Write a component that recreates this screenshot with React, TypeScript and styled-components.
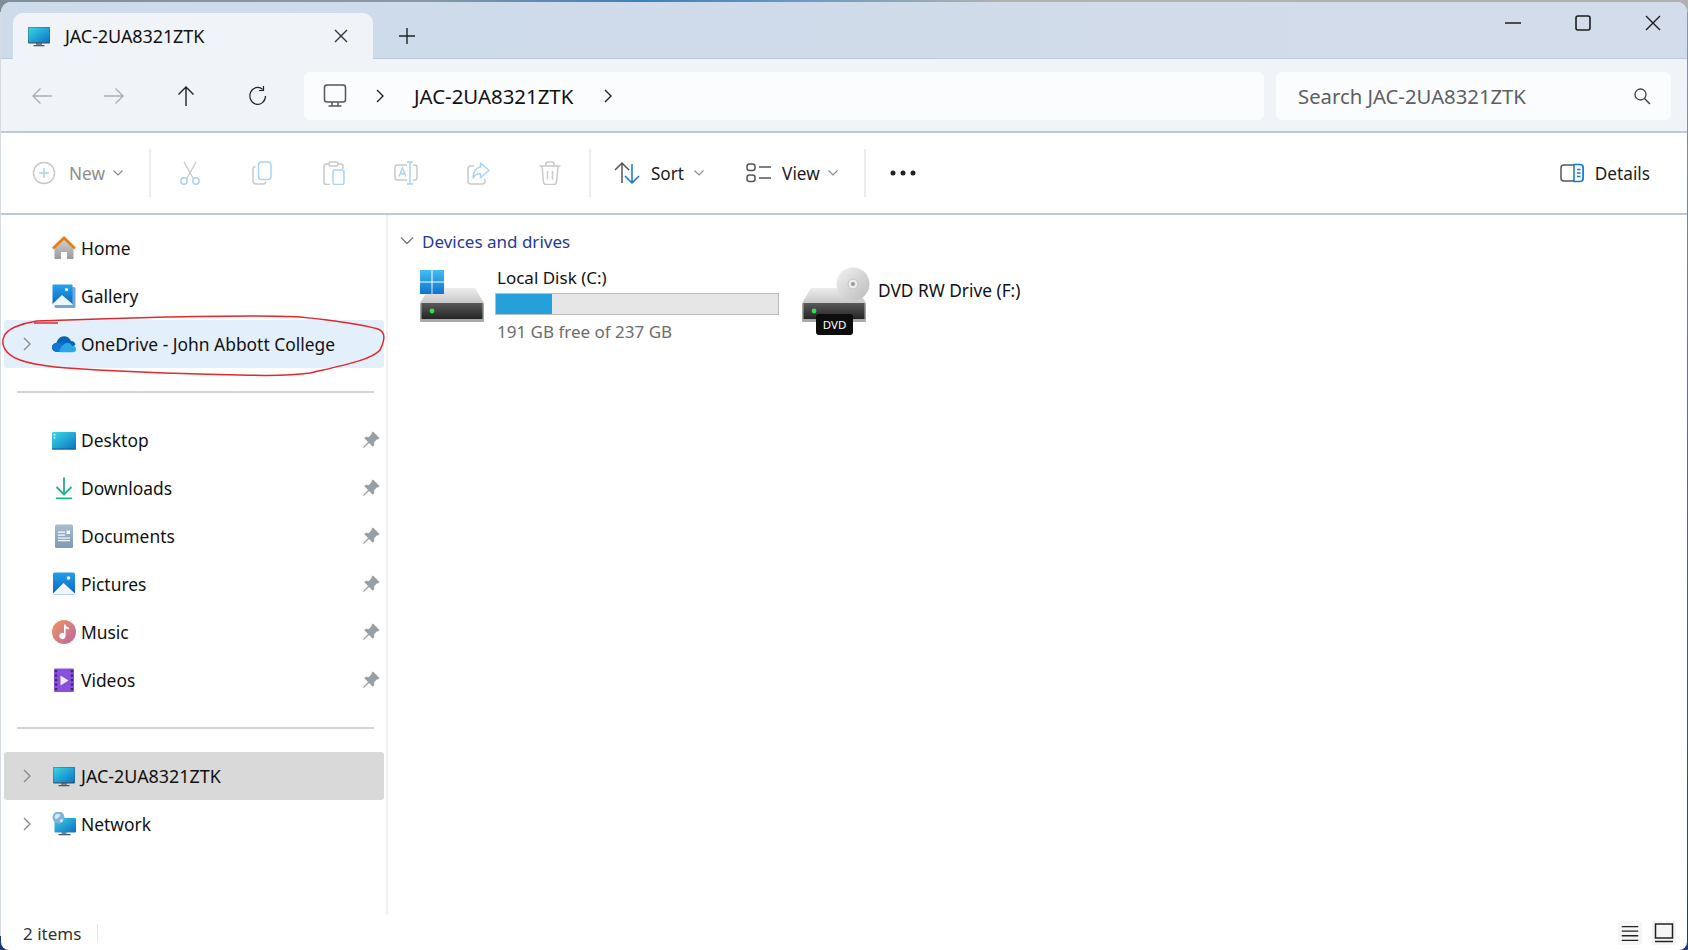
import React from 'react';
import styled, { createGlobalStyle } from 'styled-components';

const GlobalStyle = createGlobalStyle`
  html, body { margin: 0; padding: 0; height: 100%; overflow: hidden; }
  body { font-family: "Noto Sans", "Open Sans", sans-serif; color: #111; }
  * { box-sizing: border-box; }
`;

const Desk = styled.div`
  position: relative;
  width: 1688px;
  height: 950px;
  padding: 2px 1px 0;
  background:
    linear-gradient(90deg, #7f8f99 0%, #8a9aa5 25%, #3d7fb8 38%, #6f9cbf 48%, #b5b3ae 60%, #b0b0b0 100%) top / 100% 12px no-repeat,
    linear-gradient(#d5dce3, #d5dce3) left top / 1px 936px no-repeat,
    linear-gradient(#8d97a6, #1c3a7c) right top / 1px 100% no-repeat,
    #1c3a7c;
`;

const Window = styled.div`
  height: 948px;
  border-radius: 10px 10px 8px 8px;
  overflow: hidden;
  background: #fff;
  display: flex;
  flex-direction: column;
`;

const TitleBar = styled.div`
  height: 57px;
  flex: none;
  display: flex;
  align-items: flex-start;
  background: linear-gradient(90deg, #cddbea, #d3dcea);
  border-bottom: 1px solid #bccbda;
`;

const Tab = styled.div`
  width: 360px;
  height: 46px;
  margin: 11px 0 0 12px;
  padding: 0 20px 0 14px;
  display: flex;
  align-items: center;
  background: #f0f4f9;
  border-radius: 10px 10px 0 0;
  font-size: 18px;
  letter-spacing: -0.1px;
`;

const TabLabel = styled.span`
  flex: 1;
  margin-left: 14px;
`;

const NewTab = styled.div`
  width: 24px;
  height: 24px;
  margin: 22px 0 0 22px;
  display: flex;
  align-items: center;
  justify-content: center;
`;

const WindowControls = styled.div`
  margin-left: auto;
  margin-right: -1px;
  display: flex;
`;

const WindowButton = styled.div`
  width: 70px;
  height: 42px;
  display: flex;
  align-items: center;
  justify-content: center;
`;

const NavBar = styled.div`
  height: 74px;
  flex: none;
  padding: 13px 16px 0 5px;
  display: flex;
  align-items: flex-start;
  background: #f0f4f9;
  border-bottom: 2px solid #bccbda;
`;

const NavButton = styled.div`
  width: 72px;
  height: 48px;
  display: flex;
  align-items: center;
  justify-content: center;
`;

const AddressBox = styled.div`
  flex: 1;
  height: 48px;
  margin-left: 10px;
  padding-left: 19px;
  display: flex;
  align-items: center;
  gap: 27px;
  background: #fbfcfe;
  border-radius: 6px;
  font-size: 20.4px;
`;

const AddressText = styled.span`
  margin-left: 1px;
  margin-right: 2px;
`;

const SearchBox = styled.div`
  width: 395px;
  height: 48px;
  margin-left: 12px;
  padding: 0 20px 0 22px;
  display: flex;
  align-items: center;
  justify-content: space-between;
  background: #fbfcfe;
  border-radius: 6px;
  font-size: 20.3px;
  color: #5e5e5e;
`;

const Toolbar = styled.div`
  height: 82px;
  flex: none;
  padding-left: 31px;
  display: flex;
  align-items: center;
  background: #fff;
  border-bottom: 2px solid #bccbda;
  font-size: 17.2px;
`;

const ToolSeparator = styled.div<{ $before: number; $after?: number }>`
  width: 2px;
  height: 48px;
  margin-left: ${p => p.$before}px;
  margin-right: ${p => p.$after ?? 0}px;
  background: #ececec;
`;

const ToolLabelButton = styled.div<{ $disabled?: boolean; $offset?: number }>`
  display: flex;
  align-items: center;
  margin-left: ${p => p.$offset ?? 0}px;
  color: ${p => (p.$disabled ? '#8c8c8c' : '#1c1c1c')};
`;

const ToolText = styled.span<{ $before: number; $after: number }>`
  margin-left: ${p => p.$before}px;
  margin-right: ${p => p.$after}px;
`;

const ToolIcon = styled.div`
  width: 72px;
  height: 48px;
  display: flex;
  align-items: center;
  justify-content: center;
`;

const DetailsButton = styled.div`
  margin-left: auto;
  padding-right: 37px;
  display: flex;
  align-items: center;
  gap: 11px;
  color: #1c1c1c;
`;

const Body = styled.div`
  flex: 1;
  min-height: 0;
  display: flex;
`;

const Sidebar = styled.nav`
  width: 387px;
  flex: none;
  padding: 9px 0 0 3px;
  border-right: 2px solid #f2f2f2;
  font-size: 17.4px;
`;

const TreeRow = styled.div<{ $state?: 'hover' | 'selected' }>`
  width: 380px;
  height: 48px;
  display: flex;
  align-items: center;
  border-radius: 3px;
  background: ${p => (p.$state === 'hover' ? '#e3f0fb' : p.$state === 'selected' ? '#d9d9d9' : 'transparent')};
`;

const Expander = styled.div`
  width: 48px;
  flex: none;
  padding-left: 17px;
  display: flex;
`;

const TreeLabel = styled.span<{ $size?: number }>`
  flex: 1;
  margin-left: 5px;
  font-size: ${p => p.$size ?? 17.4}px;
`;

const PinSlot = styled.div`
  width: 22px;
  flex: none;
  display: flex;
`;

const TreeRule = styled.div`
  width: 357px;
  height: 2px;
  margin: 23px 0 23px 13px;
  background: #d4d4d4;
`;

const Content = styled.main`
  flex: 1;
  padding: 13px 0 0 12px;
`;

const GroupHeader = styled.div`
  height: 26px;
  display: flex;
  align-items: center;
  gap: 8px;
  font-size: 17px;
  color: #243a96;
`;

const DriveList = styled.div`
  margin: 11px 0 0 20px;
  display: flex;
`;

const DriveTile = styled.div<{ $width: number }>`
  width: ${p => p.$width}px;
  display: flex;
  align-items: flex-start;
  font-size: 17px;
`;

const DriveInfo = styled.div`
  margin-left: 11px;
  width: 284px;
`;

const DriveName = styled.div`
  height: 26px;
  line-height: 26px;
  padding-left: 2px;
`;

const OpticalName = styled.div`
  height: 26px;
  line-height: 26px;
  margin: 13px 0 0 8px;
  font-size: 17.3px;
`;

const UsageBar = styled.div`
  height: 22px;
  margin-top: 2px;
  background: #e6e6e6;
  border: 1px solid #bcbcbc;
`;

const UsageFill = styled.div`
  height: 100%;
  background: #26a0da;
`;

const DriveCaption = styled.div`
  height: 26px;
  line-height: 26px;
  margin-top: 4px;
  padding-left: 2px;
  color: #6d6d6d;
`;

const StatusBar = styled.footer`
  height: 35px;
  flex: none;
  padding: 1px 11px 0 22px;
  display: flex;
  align-items: center;
  font-size: 17px;
  color: #333;
`;

const StatusSeparator = styled.div`
  width: 1px;
  height: 18px;
  margin-left: 16px;
  background: #e6e6e6;
`;

const ViewToggles = styled.div`
  margin-left: auto;
  display: flex;
  gap: 10px;
`;

const ViewToggle = styled.div`
  width: 24px;
  height: 24px;
  border-radius: 3px;
  background: #f5f5f5;
  display: flex;
  align-items: center;
  justify-content: center;
`;

const Annotation = styled.svg`
  position: absolute;
  left: 0;
  top: 300px;
  pointer-events: none;
`;

const Chevron = ({ color = '#8a8a8a' }: { color?: string }) => (
  <svg width="12" height="16" viewBox="0 0 12 16" fill="none">
    <path d="M3 2l6 6-6 6" stroke={color} strokeWidth="1.4" />
  </svg>
);

const Caret = () => (
  <svg width="12" height="8" viewBox="0 0 12 8" fill="none">
    <path d="M1.5 1.5L6 6l4.5-4.5" stroke="#8c8c8c" strokeWidth="1.2" />
  </svg>
);

const Line = ({ d, color = '#1c1c1c', size = 24, w = 1.4 }: { d: string; color?: string; size?: number; w?: number }) => (
  <svg width={size} height={size} viewBox="0 0 24 24" fill="none">
    <path d={d} stroke={color} strokeWidth={w} />
  </svg>
);

const PcIcon = ({ id, size = 24 }: { id: string; size?: number }) => (
  <svg width={size} height={size} viewBox="0 0 24 24">
    <defs>
      <linearGradient id={id} x1="0" y1="0" x2="1" y2="1">
        <stop offset="0" stopColor="#38d8e6" />
        <stop offset="1" stopColor="#0d72c4" />
      </linearGradient>
    </defs>
    <rect x="9" y="19" width="6" height="2.5" fill="#7b8792" />
    <rect x="6.5" y="21" width="11" height="1.3" fill="#4f5a64" />
    <rect x="1" y="3" width="22" height="16.5" rx="1" fill="#3f4c58" />
    <rect x="1.4" y="3.4" width="21.2" height="15" fill={`url(#${id})`} />
  </svg>
);

const HomeIcon = () => (
  <svg width="24" height="24" viewBox="0 0 24 24">
    <defs>
      <linearGradient id="homeWall" x1="0" y1="0" x2="0" y2="1">
        <stop offset="0" stopColor="#d2d2d2" />
        <stop offset="1" stopColor="#9a9a9a" />
      </linearGradient>
    </defs>
    <path d="M2.500 11.500L12 3l9.500 8.500V23h-6.500v-7H9v7H2.500z" fill="url(#homeWall)" />
    <path d="M1 12.500L12 2l11 10.500" fill="none" stroke="#e67e14" strokeWidth="2.800" />
  </svg>
);

const GalleryIcon = () => (
  <svg width="24" height="24" viewBox="0 0 24 24">
    <defs>
      <linearGradient id="galleryBg" x1="0" y1="0" x2="0" y2="1">
        <stop offset="0" stopColor="#26a3ec" />
        <stop offset="1" stopColor="#0a66c0" />
      </linearGradient>
    </defs>
    <rect x="2.500" y="3" width="21" height="21" rx="1.500" fill="#6fa9dc" />
    <rect x="0.500" y="0.500" width="20" height="20.500" rx="1" fill="url(#galleryBg)" />
    <circle cx="14.500" cy="5.500" r="1.600" fill="#fff" />
    <path d="M0.500 20l9.500-9 10.500 9v1h-20z" fill="#eef6fd" />
  </svg>
);

const CloudIcon = () => (
  <svg width="24" height="24" viewBox="0 0 24 24">
    <path d="M6 20C2.500 20 0 18 0 15.200C0 12.800 2 11 4.500 10.800C5.500 7 8.500 4.200 12 4.200C15.200 4.200 17.800 6 19 9C21.500 9.200 23 10.500 23.500 12.500L15 20z" fill="#0364b8" />
    <path d="M6 20C2.500 20 0 18 0 15.200C0 12.800 2 11 4.500 10.800C6 10.600 8 11 9.500 12.200L14 20z" fill="#0f78d4" />
    <path d="M9.500 20.200C7 20.200 6.800 17 9 15.900C10 12.800 13 10.600 16 11C18 11.300 19.500 12.400 20.200 13.800C22.800 13.800 24 15.500 24 17.200C24 19 22.600 20.200 21 20.200z" fill="#28a8ea" />
  </svg>
);

const DesktopIcon = () => (
  <svg width="24" height="24" viewBox="0 0 24 24">
    <defs>
      <linearGradient id="deskBg" x1="0" y1="0" x2="1" y2="1">
        <stop offset="0" stopColor="#3bdbe8" />
        <stop offset="1" stopColor="#0c72c0" />
      </linearGradient>
    </defs>
    <rect x="0" y="4" width="24" height="17.500" rx="1.200" fill="url(#deskBg)" />
    <rect x="1.800" y="6" width="1.500" height="1.500" fill="#fff" />
    <rect x="1.800" y="9" width="1.500" height="1.500" fill="#fff" />
    <rect x="0" y="20.500" width="24" height="1" fill="#0c5c99" />
  </svg>
);

const DownloadIcon = () => (
  <svg width="24" height="24" viewBox="0 0 24 24" fill="none">
    <path d="M12 1.500v17M4.500 11l7.500 7.500 7.500-7.500" stroke="#22b08e" strokeWidth="1.800" />
    <rect x="4" y="21.500" width="16" height="1.700" fill="#22b08e" />
  </svg>
);

const DocumentIcon = () => (
  <svg width="24" height="24" viewBox="0 0 24 24">
    <defs>
      <linearGradient id="docBg" x1="0" y1="0" x2="0" y2="1">
        <stop offset="0" stopColor="#a9bdd4" />
        <stop offset="1" stopColor="#7d98b8" />
      </linearGradient>
    </defs>
    <rect x="3" y="0.500" width="18" height="23.500" rx="1.500" fill="url(#docBg)" />
    <rect x="6" y="7.500" width="7" height="1.200" fill="#fff" />
    <rect x="6" y="10.500" width="7" height="1.200" fill="#fff" />
    <rect x="6" y="13.500" width="12" height="1.200" fill="#fff" />
    <rect x="6" y="16" width="12" height="1.200" fill="#fff" />
    <rect x="14.500" y="6.500" width="3.500" height="3.500" fill="#fff" />
  </svg>
);

const PictureIcon = () => (
  <svg width="24" height="24" viewBox="0 0 24 24">
    <defs>
      <linearGradient id="picBg" x1="0" y1="0" x2="0" y2="1">
        <stop offset="0" stopColor="#23a0ea" />
        <stop offset="1" stopColor="#0a64bd" />
      </linearGradient>
    </defs>
    <rect x="1" y="0.500" width="22" height="22" rx="1.500" fill="url(#picBg)" />
    <circle cx="16.500" cy="6" r="1.800" fill="#fff" />
    <path d="M1 21.500l10.500-10.500 11.500 10.500v1H1z" fill="#eef6fd" />
  </svg>
);

const MusicIcon = () => (
  <svg width="24" height="24" viewBox="0 0 24 24">
    <defs>
      <linearGradient id="musicBg" x1="0" y1="0" x2="1" y2="1">
        <stop offset="0" stopColor="#f0955a" />
        <stop offset="1" stopColor="#bb66a8" />
      </linearGradient>
    </defs>
    <circle cx="12" cy="12" r="12" fill="url(#musicBg)" />
    <path d="M12 4.500h1.600c.2 2 1.500 2.800 3.400 3v2c-1.500 0-2.500-.5-3.400-1.200V16a3.200 3.200 0 1 1-1.600-2.800z" fill="#fff" />
  </svg>
);

const VideoIcon = () => (
  <svg width="24" height="24" viewBox="0 0 24 24">
    <rect x="2" y="0.500" width="20" height="23.500" rx="1.200" fill="#8a4fdc" />
    {[2, 6.500, 11, 15.500, 20].map(y => (
      <React.Fragment key={y}>
        <rect x="3" y={y} width="2.200" height="2.200" fill="#3c2a66" />
        <rect x="18.800" y={y} width="2.200" height="2.200" fill="#3c2a66" />
      </React.Fragment>
    ))}
    <path d="M8.500 7.500l8 5-8 5z" fill="#f1e9fc" />
  </svg>
);

const NetworkIcon = () => (
  <svg width="24" height="24" viewBox="0 0 24 24">
    <defs>
      <linearGradient id="netBg" x1="0" y1="0" x2="1" y2="1">
        <stop offset="0" stopColor="#38d0e6" />
        <stop offset="1" stopColor="#0d6fc0" />
      </linearGradient>
    </defs>
    <rect x="9.500" y="20" width="5" height="2.500" fill="#7b8792" />
    <rect x="6.500" y="22" width="12" height="1.300" fill="#4f5a64" />
    <rect x="2.500" y="6" width="21.500" height="14.500" rx="1" fill="url(#netBg)" />
    <circle cx="6.500" cy="5.500" r="6" fill="#7fb4dc" />
    <path d="M3 3c1.500-1.500 4-1.500 5-.5 1 1.500-1 2.500-2 3.500-1 1.500-3 1-3.500-.5zM8 8c1-1 3-1 3 .5-.5 1.500-2 2.500-3 1.500z" fill="#d6e8f5" />
  </svg>
);

const Pin = () => (
  <svg width="18" height="18" viewBox="0 0 18 18">
    <path d="M11 .5L17.500 7l-1.500 1.500-1-.3-3 3 .3 3L10.800 15.700 7 11.900 1.800 17 1 16.200 6.100 11 2.300 7.200 3.800 5.700l3 .3 3-3-.3-1z" fill="#96a0a8" />
  </svg>
);

const DriveBody = ({ id }: { id: string }) => (
  <>
    <defs>
      <linearGradient id={`${id}Top`} x1="0" y1="0" x2="0" y2="1">
        <stop offset="0" stopColor="#ececec" />
        <stop offset="1" stopColor="#c9c9c9" />
      </linearGradient>
      <linearGradient id={`${id}Front`} x1="0" y1="0" x2="0" y2="1">
        <stop offset="0" stopColor="#5a5a5a" />
        <stop offset="1" stopColor="#242424" />
      </linearGradient>
    </defs>
    <path d="M9 23h46l9 15H0z" fill={`url(#${id}Top)`} />
    <rect x="0" y="38" width="64" height="19" rx="1" fill="#a9a9a9" />
    <rect x="1.500" y="38" width="61" height="16" fill={`url(#${id}Front)`} />
    <circle cx="12" cy="46" r="2.400" fill="#2fe04a" />
  </>
);

const LocalDiskIcon = () => (
  <svg width="64" height="64" viewBox="0 0 64 64">
    <DriveBody id="disk" />
    <defs>
      <linearGradient id="winLogo" x1="0" y1="0" x2="0" y2="1">
        <stop offset="0" stopColor="#45bdf2" />
        <stop offset="1" stopColor="#0d74d0" />
      </linearGradient>
    </defs>
    <path d="M0 5h11.500v11.500H0zM12.500 5H24v11.500H12.500zM0 17.500h11.500V29H0zM12.500 17.500H24V29H12.500z" fill="url(#winLogo)" />
  </svg>
);

const DvdIcon = () => (
  <svg width="68" height="72" viewBox="0 0 68 72">
    <DriveBody id="dvd" />
    <defs>
      <linearGradient id="discFace" x1="0" y1="0" x2="1" y2="1">
        <stop offset="0" stopColor="#f4f4f4" />
        <stop offset="0.500" stopColor="#d6d6d6" />
        <stop offset="1" stopColor="#bbb" />
      </linearGradient>
    </defs>
    <circle cx="51" cy="19" r="16.500" fill="url(#discFace)" />
    <circle cx="51" cy="19" r="5" fill="#ececec" stroke="#c4c4c4" />
    <circle cx="51" cy="19" r="2" fill="#9a9a9a" />
    <rect x="14" y="49" width="37" height="21" rx="3" fill="#0d0d0d" />
    <text x="32.500" y="64" textAnchor="middle" fontSize="11.500" fontFamily="Noto Sans, sans-serif" fill="#fff">DVD</text>
  </svg>
);

const G = '#c9c9c9';
const B = '#a9d3f4';

const NewGlyph = () => (
  <svg width="24" height="24" viewBox="0 0 24 24" fill="none">
    <circle cx="12" cy="12" r="10.500" stroke={G} strokeWidth="1.500" />
    <path d="M12 7v10M7 12h10" stroke={B} strokeWidth="1.500" />
  </svg>
);

const CutGlyph = () => (
  <svg width="24" height="24" viewBox="0 0 24 24" fill="none">
    <path d="M6 1l9.500 17M18 1L8.500 18" stroke={G} strokeWidth="1.400" />
    <circle cx="6" cy="20" r="3.200" stroke={B} strokeWidth="1.500" />
    <circle cx="18" cy="20" r="3.200" stroke={B} strokeWidth="1.500" />
  </svg>
);

const CopyGlyph = () => (
  <svg width="24" height="24" viewBox="0 0 24 24" fill="none">
    <path d="M5.500 5.500C3.500 6 3 7 3 8.500V20c0 2 1 3 3 3h7c1.500 0 2.500-.5 3-2" stroke={G} strokeWidth="1.500" />
    <rect x="8.500" y="1" width="12.500" height="17.500" rx="3" stroke={B} strokeWidth="1.500" />
  </svg>
);

const PasteGlyph = () => (
  <svg width="24" height="24" viewBox="0 0 24 24" fill="none">
    <path d="M7 3H4.500C3 3 2 4 2 5.500V21c0 1.500 1 2.500 2.500 2.500H8M16 3h2.500C20 3 21 4 21 5.500V8" stroke={G} strokeWidth="1.500" />
    <rect x="7" y="1" width="9" height="4" rx="1.500" stroke={G} strokeWidth="1.500" />
    <rect x="11" y="9" width="11" height="14.500" rx="2" stroke={B} strokeWidth="1.500" />
  </svg>
);

const RenameGlyph = () => (
  <svg width="24" height="24" viewBox="0 0 24 24" fill="none">
    <path d="M13 4H3.500C2 4 1 5 1 6.500v10C1 18 2 19 3.500 19H13M19 4h1.500C22 4 23 5 23 6.500v10c0 1.500-1 2.500-2.500 2.500H19" stroke={G} strokeWidth="1.500" />
    <path d="M5 15.500L8.500 7l3.500 8.500M6.200 12.800h4.600" stroke={B} strokeWidth="1.400" />
    <path d="M16 1v22M13 1h6M13 23h6" stroke={B} strokeWidth="1.500" />
  </svg>
);

const ShareGlyph = () => (
  <svg width="24" height="24" viewBox="0 0 24 24" fill="none">
    <path d="M8 5H5C3 5 2 6 2 8v12c0 2 1 3 3 3h11c2 0 3-1 3-3v-2" stroke={G} strokeWidth="1.500" />
    <path d="M14.500 2L23 9.500 14.500 16.500V12.500C11 12.500 8.500 14 7 17c0-6 3-10.500 7.500-11z" stroke={B} strokeWidth="1.500" strokeLinejoin="round" />
  </svg>
);

const TrashGlyph = () => (
  <svg width="24" height="24" viewBox="0 0 24 24" fill="none">
    <path d="M1.500 5h21M8 5V3c0-1 .8-2 2-2h4c1.200 0 2 1 2 2v2M4 5l1.500 16c.1 1.500 1 2.500 2.500 2.500h8c1.500 0 2.400-1 2.500-2.500L20 5M9.500 10v8.500M14.500 10v8.500" stroke={G} strokeWidth="1.500" />
  </svg>
);

const pinned = [
  { label: 'Desktop', icon: <DesktopIcon /> },
  { label: 'Downloads', icon: <DownloadIcon /> },
  { label: 'Documents', icon: <DocumentIcon /> },
  { label: 'Pictures', icon: <PictureIcon /> },
  { label: 'Music', icon: <MusicIcon /> },
  { label: 'Videos', icon: <VideoIcon /> },
];

export default function App() {
  return (
    <Desk>
      <GlobalStyle />
      <Window>
        <TitleBar>
          <Tab>
            <PcIcon id="tabPc" />
            <TabLabel>JAC-2UA8321ZTK</TabLabel>
            <Line d="M6 6l12 12M18 6L6 18" color="#333" />
          </Tab>
          <NewTab>
            <Line d="M12 4v16M4 12h16" color="#222" />
          </NewTab>
          <WindowControls>
            <WindowButton><Line d="M4 12h16" /></WindowButton>
            <WindowButton>
              <svg width="24" height="24" viewBox="0 0 24 24" fill="none">
                <rect x="5" y="5" width="14" height="14" rx="2" stroke="#1c1c1c" strokeWidth="1.600" />
              </svg>
            </WindowButton>
            <WindowButton><Line d="M5 5l14 14M19 5L5 19" /></WindowButton>
          </WindowControls>
        </TitleBar>

        <NavBar>
          <NavButton><Line d="M22 12H3M10.500 4.500L3 12l7.500 7.500" color="#a8aeb5" /></NavButton>
          <NavButton><Line d="M2 12h19M13.500 4.500L21 12l-7.500 7.500" color="#a8aeb5" /></NavButton>
          <NavButton><Line d="M12 22V3M4.500 10.500L12 3l7.500 7.500" color="#222" /></NavButton>
          <NavButton><Line d="M19.500 12a7.800 8.500 0 1 1-2.800-6.600M17.500 2v4.500H13" color="#222" w={1.200} /></NavButton>
          <AddressBox>
            <svg width="24" height="24" viewBox="0 0 24 24" fill="none">
              <rect x="1.500" y="1" width="21" height="17" rx="2.500" stroke="#555" strokeWidth="1.500" />
              <path d="M9 18v3.500M15 18v3.500M5.500 22h13" stroke="#555" strokeWidth="1.500" />
            </svg>
            <Chevron color="#222" />
            <AddressText>JAC-2UA8321ZTK</AddressText>
            <Chevron color="#222" />
          </AddressBox>
          <SearchBox>
            <span>Search JAC-2UA8321ZTK</span>
            <svg width="18" height="18" viewBox="0 0 18 18" fill="none">
              <circle cx="7.500" cy="7.500" r="5.500" stroke="#444" strokeWidth="1.300" />
              <path d="M11.500 11.500l5.500 5.500" stroke="#444" strokeWidth="1.500" />
            </svg>
          </SearchBox>
        </NavBar>

        <Toolbar>
          <ToolLabelButton $disabled>
            <NewGlyph />
            <ToolText $before={13} $after={7}>New</ToolText>
            <Caret />
          </ToolLabelButton>
          <ToolSeparator $before={25} $after={3} />
          <ToolIcon><CutGlyph /></ToolIcon>
          <ToolIcon><CopyGlyph /></ToolIcon>
          <ToolIcon><PasteGlyph /></ToolIcon>
          <ToolIcon><RenameGlyph /></ToolIcon>
          <ToolIcon><ShareGlyph /></ToolIcon>
          <ToolIcon><TrashGlyph /></ToolIcon>
          <ToolSeparator $before={3} />
          <ToolLabelButton $offset={23}>
            <svg width="26" height="24" viewBox="0 0 26 24" fill="none">
              <path d="M8 22V2M1 9l7-7 7 7" stroke="#555" strokeWidth="1.500" />
              <path d="M18 3v19M11 15l7 7 7-7" stroke="#0f78d4" strokeWidth="1.500" />
            </svg>
            <ToolText $before={11} $after={9}>Sort</ToolText>
            <Caret />
          </ToolLabelButton>
          <ToolLabelButton $offset={41}>
            <svg width="26" height="24" viewBox="0 0 26 24" fill="none">
              <rect x="1" y="3" width="8" height="6.500" rx="2.500" stroke="#555" strokeWidth="1.500" />
              <rect x="1" y="14" width="8" height="6.500" rx="2.500" stroke="#555" strokeWidth="1.500" />
              <path d="M13 6h12M13 17h12" stroke="#555" strokeWidth="1.500" />
            </svg>
            <ToolText $before={10} $after={7}>View</ToolText>
            <Caret />
          </ToolLabelButton>
          <ToolSeparator $before={25} $after={1} />
          <ToolIcon>
            <svg width="26" height="6" viewBox="0 0 26 6">
              <circle cx="3" cy="3" r="2.500" fill="#222" />
              <circle cx="13" cy="3" r="2.500" fill="#222" />
              <circle cx="23" cy="3" r="2.500" fill="#222" />
            </svg>
          </ToolIcon>
          <DetailsButton>
            <svg width="24" height="20" viewBox="0 0 24 20" fill="none">
              <rect x="1" y="2" width="22" height="16" rx="3" stroke="#555" strokeWidth="1.500" />
              <path d="M14 1.500h6c2 0 3 1 3 3v11c0 2-1 3-3 3h-6z" fill="#fff" stroke="#0f78d4" strokeWidth="1.500" />
              <path d="M17 6.500h3.500M17 10h3.500M17 13.500h3.500" stroke="#0f78d4" strokeWidth="1.300" />
            </svg>
            <span>Details</span>
          </DetailsButton>
        </Toolbar>

        <Body>
          <Sidebar>
            <TreeRow>
              <Expander />
              <HomeIcon />
              <TreeLabel>Home</TreeLabel>
            </TreeRow>
            <TreeRow>
              <Expander />
              <GalleryIcon />
              <TreeLabel>Gallery</TreeLabel>
            </TreeRow>
            <TreeRow $state="hover">
              <Expander><Chevron /></Expander>
              <CloudIcon />
              <TreeLabel>OneDrive - John Abbott College</TreeLabel>
            </TreeRow>
            <TreeRule />
            {pinned.map(item => (
              <TreeRow key={item.label}>
                <Expander />
                {item.icon}
                <TreeLabel>{item.label}</TreeLabel>
                <PinSlot><Pin /></PinSlot>
              </TreeRow>
            ))}
            <TreeRule />
            <TreeRow $state="selected">
              <Expander><Chevron /></Expander>
              <PcIcon id="treePc" />
              <TreeLabel $size={17.9}>JAC-2UA8321ZTK</TreeLabel>
            </TreeRow>
            <TreeRow>
              <Expander><Chevron /></Expander>
              <NetworkIcon />
              <TreeLabel>Network</TreeLabel>
            </TreeRow>
          </Sidebar>

          <Content>
            <GroupHeader>
              <svg width="14" height="10" viewBox="0 0 14 10" fill="none">
                <path d="M1 1.500l6 6 6-6" stroke="#777" strokeWidth="1.300" />
              </svg>
              <span>Devices and drives</span>
            </GroupHeader>
            <DriveList>
              <DriveTile $width={382}>
                <LocalDiskIcon />
                <DriveInfo>
                  <DriveName>Local Disk (C:)</DriveName>
                  <UsageBar>
                    <UsageFill style={{ width: `${(46 / 237) * 100 + 0.5}%` }} />
                  </UsageBar>
                  <DriveCaption>191 GB free of 237 GB</DriveCaption>
                </DriveInfo>
              </DriveTile>
              <DriveTile $width={300}>
                <DvdIcon />
                <OpticalName>DVD RW Drive (F:)</OpticalName>
              </DriveTile>
            </DriveList>
          </Content>
        </Body>

        <StatusBar>
          <span>2 items</span>
          <StatusSeparator />
          <ViewToggles>
            <ViewToggle>
              <Line d="M3 5h18M3 10h18M3 15h18M3 20h18" color="#222" size={22} w={1.500} />
            </ViewToggle>
            <ViewToggle>
              <svg width="20" height="20" viewBox="0 0 20 20" fill="none">
                <rect x="1.500" y="1" width="17" height="14" stroke="#222" strokeWidth="1.500" />
                <path d="M1 18.500h18" stroke="#222" strokeWidth="1.500" />
              </svg>
            </ViewToggle>
          </ViewToggles>
        </StatusBar>
      </Window>

      <Annotation width="400" height="90" viewBox="0 300 400 90" fill="none">
        <path
          d="M37 321C70 320 130 318 167 317C220 316 270 315 300 317C330 320 360 324 378 329C386 332 385 340 380 350C372 360 340 366 310 373C280 377 240 375 200 374C160 373 110 371 67 368C40 366 15 362 7 352C-1 342 3 332 15 327C22 324 30 322 37 321"
          stroke="#e0282e"
          strokeWidth="1.500"
        />
        <path d="M34 323H58" stroke="#e0282e" strokeWidth="1.500" />
      </Annotation>
    </Desk>
  );
}
